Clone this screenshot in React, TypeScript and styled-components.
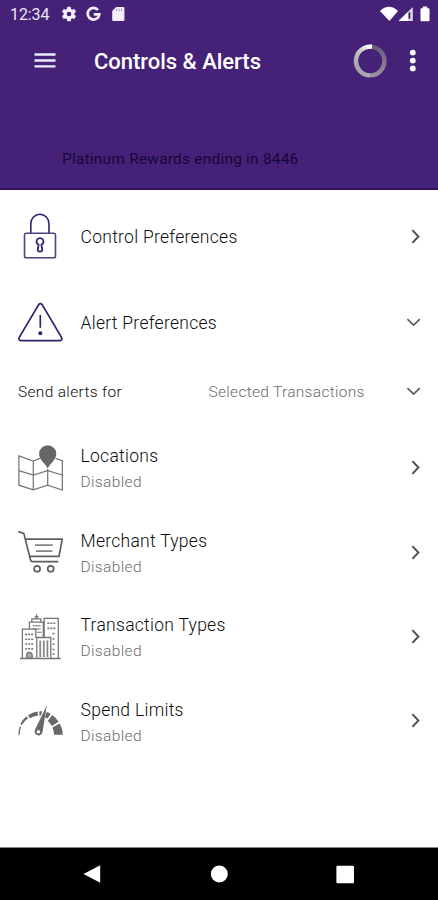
import React from 'react';
import styled, { createGlobalStyle } from 'styled-components';

const GlobalStyle = createGlobalStyle`
  * { box-sizing: border-box; }
  body { margin: 0; background: #fff; font-family: Roboto, "Liberation Sans", sans-serif; }
  svg { display: block; flex: none; }
`;

const Screen = styled.div`
  width: 438px;
  height: 900px;
  display: flex;
  flex-direction: column;
  background: #fff;
  overflow: hidden;
`;

const Header = styled.header`
  height: 190px;
  flex: none;
  background: #452278;
  border-bottom: 2px solid #33105f;
  color: #fff;
`;

const StatusBar = styled.div`
  height: 28px;
  padding: 0 8px 0 10px;
  display: flex;
  align-items: center;
  justify-content: space-between;
`;

const StatusGroup = styled.div`
  display: flex;
  align-items: center;
`;

const NotificationIcons = styled(StatusGroup)`
  gap: 8px;
`;

const Clock = styled.span`
  width: 50px;
  font-size: 16px;
  line-height: 28px;
  letter-spacing: -0.1px;
  color: #ece6f5;
  padding-top: 1px;
`;

const Toolbar = styled.div`
  height: 66px;
  padding: 0 22px 0 34px;
  display: flex;
  align-items: center;
`;

const Title = styled.h1`
  margin: 2px 0 0 38px;
  flex: 1;
  font-size: 22px;
  line-height: 28px;
  font-weight: 500;
  letter-spacing: -0.02px;
  white-space: nowrap;
`;

const CardName = styled.div`
  margin: 51px 0 0 62px;
  font-size: 15.5px;
  line-height: 28px;
  letter-spacing: 0.2px;
  color: #180638;
  white-space: nowrap;
`;

const List = styled.main`
  flex: 1;
  display: flex;
  flex-direction: column;
`;

const Row = styled.div<{ $h: number }>`
  height: ${(p) => p.$h}px;
  flex: none;
  padding: 0 17px 0 18px;
  display: flex;
  align-items: center;
`;

const IconSlot = styled.div`
  width: 62.5px;
  flex: none;
`;

const Texts = styled.div<{ $drop?: number }>`
  flex: 1;
  padding-top: ${(p) => p.$drop ?? 0}px;
  display: flex;
  flex-direction: column;
  white-space: nowrap;
`;

const Label = styled.span`
  font-size: 17.5px;
  line-height: 26px;
  letter-spacing: 0.28px;
  font-weight: 300;
  color: #0c0c0c;
`;

const Sub = styled.span`
  font-size: 15.5px;
  line-height: 26px;
  letter-spacing: 0.36px;
  font-weight: 300;
  color: #6c6c6c;
`;

const FilterRow = styled.div`
  height: 65px;
  flex: none;
  padding: 0 17px 3px 18px;
  display: flex;
  align-items: center;
  white-space: nowrap;
`;

const FilterLabel = styled.span`
  width: 190.5px;
  font-size: 15.5px;
  letter-spacing: 0.32px;
  font-weight: 300;
  color: #0c0c0c;
`;

const FilterValue = styled.span`
  flex: 1;
  font-size: 15.5px;
  letter-spacing: 0.3px;
  font-weight: 300;
  color: #6c6c6c;
`;

const NavBar = styled.nav`
  height: 53px;
  flex: none;
  border-top: 1px solid #888;
  background: #000;
  display: flex;
  justify-content: space-between;
  align-items: center;
  padding: 0 83px 0 82px;
`;

const Gear = () => (
  <svg width="18" height="18" viewBox="0 0 24 24" fill="#f4effa">
    <path d="M19.14 12.94c.04-.3.06-.61.06-.94s-.02-.64-.07-.94l2.03-1.58a.5.5 0 0 0 .12-.61l-1.92-3.32a.49.49 0 0 0-.59-.22l-2.39.96a7 7 0 0 0-1.62-.94l-.36-2.54A.48.48 0 0 0 13.92 2.4h-3.84a.47.47 0 0 0-.47.41l-.36 2.54c-.59.24-1.13.57-1.62.94l-2.39-.96a.48.48 0 0 0-.59.22L2.74 8.87a.47.47 0 0 0 .12.61l2.03 1.58a6 6 0 0 0 0 1.88l-2.03 1.58a.5.5 0 0 0-.12.61l1.92 3.32c.12.22.37.29.59.22l2.39-.96c.5.38 1.03.7 1.62.94l.36 2.54c.05.24.24.41.48.41h3.84c.24 0 .44-.17.47-.41l.36-2.54a7 7 0 0 0 1.62-.94l2.39.96c.22.08.47 0 .59-.22l1.92-3.32a.48.48 0 0 0-.12-.61zM12 15.1a3.1 3.1 0 1 1 0-6.2 3.1 3.1 0 0 1 0 6.2z" />
  </svg>
);

const GMark = () => (
  <svg width="16" height="16" viewBox="0 0 16 16" fill="none" stroke="#f4effa" strokeWidth="2.7">
    <path d="M12 4A5.8 5.8 0 1 0 13.3 8.3H7.8" />
  </svg>
);

const SdCard = () => (
  <svg width="16" height="16" viewBox="0 0 16 16">
    <path d="M6.2 1H13.4a1 1 0 0 1 1 1v12a1 1 0 0 1-1 1H3.2a1 1 0 0 1-1-1V5z" fill="#f4effa" />
    <path d="M6.7 2.6v2.6M9.1 2.6v2.6M11.5 2.6v2.6" stroke="#9c89ba" strokeWidth=".9" />
  </svg>
);

const Signals = () => (
  <svg width="50" height="18" viewBox="0 0 50 18" fill="#fff">
    <path d="M0 6Q9-2.4 18 6L9.4 16Z" />
    <path d="M32.8 2v14H18.6z" fill="#d9d3e6" />
    <path d="M27.8 7v9h-9.2z" />
    <path d="M29.4 7.5v6.2" stroke="#2c1658" strokeWidth="1.6" />
    <path d="M42.8 1.4h4.4v1.8h1.5a.8.8 0 0 1 .8.8v11.2a1 1 0 0 1-1 1h-7a1 1 0 0 1-1-1V4a.8.8 0 0 1 .8-.8h1.5z" />
  </svg>
);

const Menu = () => (
  <svg width="22" height="16" viewBox="0 0 22 16" stroke="#e8edff" strokeWidth="2.4">
    <path d="M.5 1.5h21M.5 7.5h21M.5 13.4h21" />
  </svg>
);

const Spinner = () => (
  <svg width="34" height="34" viewBox="0 0 34 34" fill="none" strokeWidth="4.4">
    <defs>
      <linearGradient id="ring" x1="0.8" y1="0" x2="0.2" y2="1">
        <stop offset="0" stopColor="#ffffff" />
        <stop offset=".35" stopColor="#c9c5ca" />
        <stop offset="1" stopColor="#a09aa3" />
      </linearGradient>
      <linearGradient id="ringEnd" x1="0" y1="0" x2="0" y2="1">
        <stop offset="0" stopColor="#6c5c79" />
        <stop offset="1" stopColor="#98909c" />
      </linearGradient>
    </defs>
    <path d="M17 2.6a14.4 14.4 0 0 1 0 28.8" stroke="url(#ringEnd)" />
    <path d="M19 2.7A14.4 14.4 0 1 0 17 31.4" stroke="url(#ring)" />
  </svg>
);

const ToolbarActions = styled.div`
  display: flex;
  align-items: center;
  gap: 22px;
`;

const Dots = () => (
  <svg width="7" height="24" viewBox="0 0 7 24" fill="#fff">
    <circle cx="3.8" cy="3.6" r="2.9" />
    <circle cx="3.8" cy="11.6" r="2.9" />
    <circle cx="3.8" cy="19.4" r="2.9" />
  </svg>
);

const LockIcon = () => (
  <svg width="45" height="54" viewBox="0 0 45 54" fill="none" stroke="#35216f" strokeWidth="1.6">
    <path d="M12.8 23.2v-9.5a9 9.4 0 0 1 18.2 0v9.5" />
    <rect x="6.5" y="23.2" width="31" height="24.6" rx="1.8" stroke="#514087" />
    <path d="M20.6 34.9a3.5 3.5 0 1 1 2.8 0l.9 4.7q0 2.1-2.3 2.1t-2.3-2.1z" strokeWidth="1.8" />
  </svg>
);

const AlertIcon = () => (
  <svg width="46" height="44" viewBox="0 0 46 44" fill="none" stroke="#35216f" strokeWidth="1.7" strokeLinecap="round">
    <path d="M20.7 3.6q1.7-2 3.4 0L43.5 36.4q1.1 3-1.6 3.2H2.9Q.2 39.4 1.3 36.4z" />
    <path d="M22.3 14.5v11.6" />
    <circle cx="22.3" cy="32.3" r="1.2" fill="#35216f" />
  </svg>
);

const MapIcon = () => (
  <svg width="46" height="48" viewBox="0 0 46 48" fill="none" stroke="#777" strokeWidth="1.25">
    <path d="M22.5 14.2 15.3 17 .9 12v29.2l14.4 4.7 14.4-4.7L44.3 46V16.6l-6.8-2.2M15.3 17v28.8M29.7 25v16.2M.9 26.7 15.3 31l14.4-4.4 14.6 4.4" />
    <path d="M29.7 24.8C27.6 19.6 21.1 16 21.1 9.8a8.6 8.6 0 0 1 17.2 0c0 6.2-6.5 9.8-8.6 15z" fill="#666" stroke="none" />
  </svg>
);

const CartIcon = () => (
  <svg width="46" height="46" viewBox="0 0 46 46" fill="none" stroke="#5f5f5f" strokeWidth="1.7">
    <path d="M.3 1.6 5.8 3.4l6.8 26.9q.3 1.4 1.6 1.4h26.1M8 9.2h36.2L41 26.4H12" />
    <path d="M17 15.1h17.8M18 21.2h16.3" stroke="#858585" />
    <circle cx="19.1" cy="38.8" r="3" />
    <circle cx="32.7" cy="38.8" r="3" />
  </svg>
);

const BuildingsIcon = () => (
  <svg width="46" height="50" viewBox="0 0 46 50" fill="none" stroke="#757575" strokeWidth="1.3">
    <path d="M2 46.5h40.7M4.4 46V17.2h13.4V26M11.4 17v-6.8h13.9V25M13.8 10V6.9h9V10M18.5 7V2.3M16.5 4.8h4.2M26.2 25V6.4h14.1V46M18.8 46V25.5h14V46" />
    <path d="M7.2 22.4h8M7.2 27.2h8M7.2 32h8M7.2 36.8h8M29.3 11.2h8M29.3 16.4h8M34.5 21.6h3M34.5 27h3M34.5 32.3h3M34.5 37.5h3M34.5 42h3" strokeWidth="1.6" strokeDasharray="2 1" />
    <path d="M14.8 13.8h8M14.8 17h8M18.8 20.2h5" strokeWidth="1.1" />
    <path d="M22.2 28.5V45M25.8 28.5V45M29.4 28.5V45" stroke="#888" strokeWidth="1.8" />
    <path d="M8.6 46v-2.8a2.8 2.8 0 0 1 5.6 0V46z" fill="#aaa" />
  </svg>
);

const GaugeIcon = () => (
  <svg width="46" height="34" viewBox="0 0 46 34" fill="#686868">
    <path d="M.4 30.8q-.1-4.5 1.4-8.2l1.2.3q-1.4 4-1.2 7.9z" />
    <path d="M2.4 20q2.3-4.7 6.3-7.7l1.3 1.9q-3.7 2.7-6.2 6.7z" />
    <path d="M10.1 11.3q4.5-3.2 9.4-3.8l.5 4q-4.6.6-8.2 2.8z" />
    <path d="M21.4 7.3h2.8l-1.5 4.5h-1.3zM28.6 8.1q2.2.7 4 1.9L29.6 14.5l-2.7-1.3z" />
    <path d="m34.2 11q3.9 2.8 6.4 6.8l-6.8 4.1q-1.5-2.8-4-4.8z" />
    <path d="M41.5 19.6q3.2 5 3.2 11.2h-8.6q-.1-4-1.7-7.3z" />
    <path fillRule="evenodd" d="m28.8 1.3-4.2 26.1a4 4 0 1 1-7.5-1.9zM20.4 26a1.8 1.8 0 1 0 0 3.6 1.8 1.8 0 0 0 0-3.6z" />
  </svg>
);

const ChevronRight = () => (
  <svg width="10" height="16" viewBox="0 0 10 16" fill="none" stroke="#4d4d4d" strokeWidth="1.9">
    <path d="m1.4 1.2 6 6.3-6 6.3" />
  </svg>
);

const ChevronDown = () => (
  <svg width="15" height="10" viewBox="0 0 15 10" fill="none" stroke="#5c5c5c" strokeWidth="1.7">
    <path d="m1.4 1.2 6.2 5.8 6.2-5.8" />
  </svg>
);

const categories = [
  { label: 'Locations', Icon: MapIcon },
  { label: 'Merchant Types', Icon: CartIcon },
  { label: 'Transaction Types', Icon: BuildingsIcon },
  { label: 'Spend Limits', Icon: GaugeIcon },
];

export default function App() {
  return (
    <>
      <GlobalStyle />
      <Screen>
        <Header>
          <StatusBar>
            <StatusGroup>
              <Clock>12:34</Clock>
              <NotificationIcons>
                <Gear />
                <GMark />
                <SdCard />
              </NotificationIcons>
            </StatusGroup>
            <Signals />
          </StatusBar>
          <Toolbar>
            <Menu />
            <Title>Controls &amp; Alerts</Title>
            <ToolbarActions>
              <Spinner />
              <Dots />
            </ToolbarActions>
          </Toolbar>
          <CardName>Platinum Rewards ending in 8446</CardName>
        </Header>
        <List>
          <Row $h={94}>
            <IconSlot><LockIcon /></IconSlot>
            <Texts><Label>Control Preferences</Label></Texts>
            <ChevronRight />
          </Row>
          <Row $h={77}>
            <IconSlot><AlertIcon /></IconSlot>
            <Texts><Label>Alert Preferences</Label></Texts>
            <ChevronDown />
          </Row>
          <FilterRow>
            <FilterLabel>Send alerts for</FilterLabel>
            <FilterValue>Selected Transactions</FilterValue>
            <ChevronDown />
          </FilterRow>
          {categories.map(({ label, Icon }) => (
            <Row key={label} $h={84.4}>
              <IconSlot><Icon /></IconSlot>
              <Texts $drop={2.4}>
                <Label>{label}</Label>
                <Sub>Disabled</Sub>
              </Texts>
              <ChevronRight />
            </Row>
          ))}
        </List>
        <NavBar>
          <svg width="20" height="20" viewBox="0 0 20 20" fill="#fff"><path d="M18.2 1.2v17.6L1.5 10z" /></svg>
          <svg width="18" height="18" viewBox="0 0 18 18" fill="#fff"><circle cx="9.3" cy="9" r="8.5" /></svg>
          <svg width="19" height="19" viewBox="0 0 19 19" fill="#fff"><rect x=".4" y=".7" width="17.6" height="17.6" rx="1" /></svg>
        </NavBar>
      </Screen>
    </>
  );
}
